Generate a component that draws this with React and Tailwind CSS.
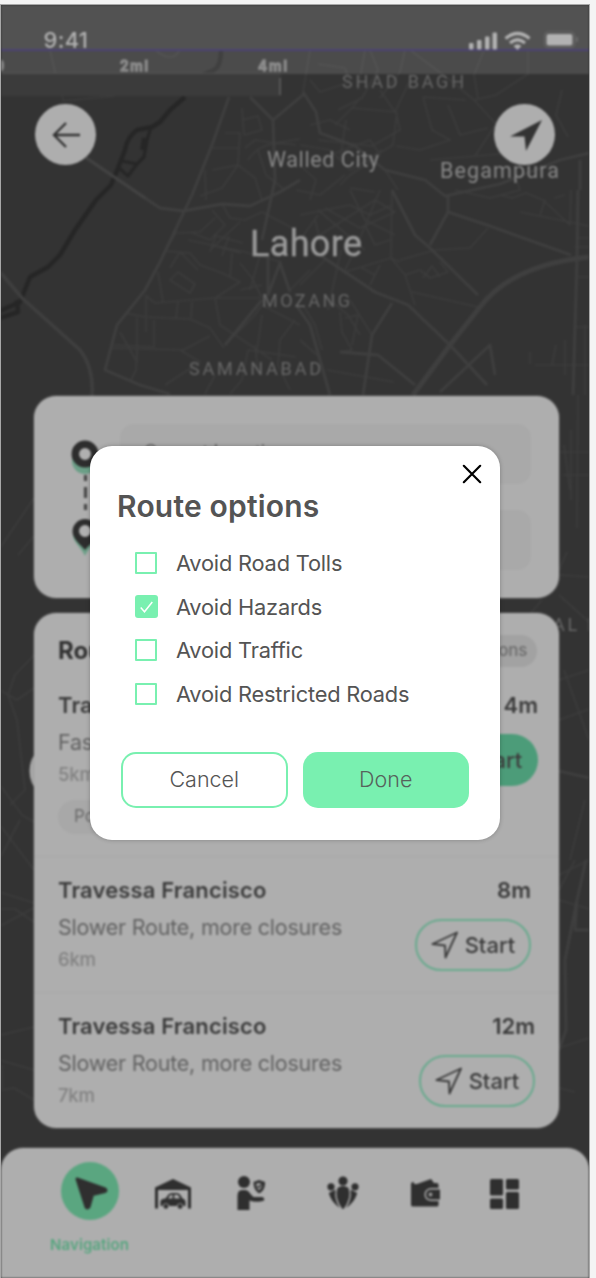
import React from "react";

const roads = [
  "M50 50L56 76M60 90L64 102M62 101L115 96M155 50Q172 64 180 50",
  "M310 50L303 92M365 50L358 90M338 110L362 98L378 70L370 50M405 50L400 72L380 98",
  "M318 64L345 68L350 82L320 92L310 80M410 50L450 80L474 100L496 95L528 74L528 50M484 50L474 75L478 98",
  "M562 90L556 115L568 137M474 100L496 124L475 156M352 108L396 112L400 130L372 146L318 140M397 112L393 145L368 160",
  "M423 97L432 130L450 140L420 150L396 146M448 105L460 135L488 128M423 97L466 100M335 125L352 108L360 98",
  "M225 133L240 133L239 148L212 148M242 108L244 135L262 130L258 116L242 120M239 148L238 165L255 178L262 200M212 170L238 165L222 188L200 196M205 170L206 200",
  "M245 148L255 140L275 143L300 139M248 160Q262 138 296 145M258 150L266 175L285 190M212 210L225 225L210 240L190 232M222 204L230 218L245 220L262 212L296 230",
  "M215 218L200 232L178 233M240 222L210 250M213 235L243 243M211 245L241 253M217 232L210 252M229 236L222 256M188 240L245 252L282 262",
  "M177 231L165 251L190 253L200 265L222 273L240 282L215 298L155 303L145 295M170 268L180 252L198 270M178 272L195 284L190 293L170 280Z",
  "M158 272L163 302M232 253L230 278M240 263L252 278L262 298M215 298L220 325L250 345L272 360M215 298L260 298M240 290L262 285",
  "M125 313L145 317L190 319L210 328L224 348M146 297L146 332M137 317L137 362L120 332M154 320L154 347L114 345M192 302L191 318M178 302L176 318",
  "M112 348L183 350L210 336M137 350L136 370L130 382M180 350L200 362L165 385M225 345L255 315L262 305L300 325M255 345L258 370M248 350L242 380L230 394",
  "M215 375L205 394M248 350L296 357M262 315L256 358M295 320L280 340L278 365L290 390M340 312L342 332L352 350L340 352M345 318L358 315L352 345",
  "M300 215L350 205L370 215L392 205M318 210L365 250M320 235L375 200L395 212L360 228L325 208M350 190L365 220L395 235M380 190L355 250L345 270",
  "M392 190L391 258L345 272M365 225L375 245L390 240M315 220L325 260L300 285M341 250L328 310M391 258L405 275L415 305M380 265L370 285M362 268L375 275",
  "M405 275L420 270L430 278L448 272L440 262M423 278L432 266L440 277M400 260L435 250L470 248L488 228M391 258L400 262M412 292L478 307",
  "M500 195L512 198L526 193L543 200L570 225L571 190M545 200L540 215M554 198L565 195M520 212L589 226M578 238H589M578 277H589M575 247H589",
  "M303 305L315 325L322 350M327 370L394 382M360 335L348 315L330 300M372 335L350 300M317 355L300 340M290 290L310 270M260 255L250 290",
  "M535 365H589M565 340V375M556 345L552 365M530 352V364M585 325V395M574 327H589",
  "M300 145L330 150L350 170L368 160L382 150M330 155L370 140L380 155L350 175L340 185M346 120L340 160M310 125L330 120L350 130M380 90L395 112L410 80",
  "M296 190L320 195L345 175M318 215L300 240M350 188L375 192M385 170L398 190M300 165L316 180L310 200M430 160L500 154M455 190L490 198L520 190L515 175",
  "M0 548L34 498M18 555L34 536M0 690L17 700L34 688M0 825L34 870M34 655L15 675L8 695L17 720L25 790L10 805M0 785L22 815L34 822M0 858L20 820",
  "M0 892L34 903M0 909H15L34 922M0 926L34 908M0 1060L34 1070M2 1065V1090L14 1088L34 1100M0 1035L34 1027",
  "M560 452H589M563 475H589M571 430V500M564 445L570 490M578 395L577 528M560 575L589 577M559 595L589 622M567 552L559 570M542 600L530 614",
  "M559 680L589 670M559 720L589 709M564 670L589 740M585 800L570 860M559 875L589 860M559 900L589 909M559 1048L589 1038M575 860L559 890M559 1088L575 1092",
];

const highways = [
  "M85 157L145 198L160 208L183 211L222 204L250 206L280 192L300 180",
  "M229 97L212 145L192 195L160 262L145 290L117 325L105 370L140 385L170 394",
  "M250 97L273 120L275 180L262 240M273 120L304 94M303 92L316 112L320 133L355 146L385 170L425 180L445 196L500 184L560 160L589 153",
  "M392 190L415 235L430 248L478 295M448 196L448 212L430 245M448 212L487 225L571 255",
  "M320 255L345 272L375 292L408 305L450 345L487 385M296 305L310 325L330 395",
  "M578 190L577 260L573 395M580 160V190M440 392L490 345L495 375M262 300L225 345M268 255V295L280 263L290 292",
  "M340 352L378 355L415 385M392 303L372 335L363 395",
  "M586 860L577 900L565 960L566 1030L559 1050M577 900L575 930H589M559 771L589 778",
];

function MapBackdrop() {
  return (
    <svg viewBox="1 5 588 1273" className="absolute inset-0 h-[1273px] w-[588px]" fill="none">
      <path d="M0 0H596V1278H0Z" fill="#333333" />
      <g stroke="#3c3c3c" strokeWidth="1.7" strokeLinejoin="round">
        {roads.map((d) => <path key={d} d={d} />)}
      </g>
      <g stroke="#3f3f3f" strokeWidth="2.800" strokeLinejoin="round">
        {highways.map((d) => <path key={d} d={d} />)}
      </g>
      <path d="M413 395L450 345L480 307Q512 265 589 257" stroke="#3f3f3f" strokeWidth="5" />
      <g stroke="#262626" strokeWidth="4.500" strokeLinejoin="round">
        <path d="M221 50Q221 66 214 70L200 76M185 97L170 110L160 122L152 127L137 130Q127 137 125 150L118 168L111 185L96 200L75 230L60 255L48 267L30 277L20 302L0 311M17 300L18 312L0 318" />
        <path d="M151 127L147 140L144 157L137 164L128 176L119 168M122 161L137 164" strokeWidth="3.200" />
        <path d="M145 138L143 150" strokeWidth="6" />
      </g>
      <path d="M0 272L22 298L80 350Q94 368 92 396" stroke="#3f3f3f" strokeWidth="3.5" />
      <path d="M85 157L145 198" stroke="#424242" strokeWidth="3" />
      <path d="M0 73H281V96H0Z" fill="#3b3b3b" />
      <path d="M280 78V95" stroke="#606060" strokeWidth="1.5" />
      <path d="M0 0H596V74H0Z" fill="#fff" fillOpacity="0.12" />
      <path d="M0 0H596V50H0Z" fill="#525252" />
      <path d="M0 50H596" stroke="#4b4274" strokeWidth="2" />
      <g fontFamily="Inter, sans-serif" fontSize="14" fontWeight="500" stroke="#8c8c8c" fill="#555" strokeWidth="1.5">
        <text x="-5" y="71">0</text>
        <text x="120" y="71" textLength="28">2mi</text>
        <text x="258" y="71" textLength="29">4mi</text>
      </g>
      <g fontFamily="Roboto, sans-serif" fill="#676767" fontSize="18">
        <text x="342" y="88" textLength="122">SHAD BAGH</text>
        <text x="262" y="307" textLength="88">MOZANG</text>
        <text x="189" y="375" textLength="132">SAMANABAD</text>
        <text x="553" y="631" textLength="44">AL F</text>
      </g>
      <circle cx="60" cy="771" r="30.5" fill="#aaa" />
    </svg>
  );
}

function PlaceNames() {
  return (
    <svg viewBox="1 5 588 400" className="pointer-events-none absolute inset-x-0 top-0 h-[400px] w-[588px]" fontFamily="Roboto, sans-serif" fill="#888">
      <text x="267" y="167" fontSize="21.5" textLength="112">Walled City</text>
      <text x="440" y="178" fontSize="21.5" textLength="119">Begampura</text>
      <text x="250" y="256" fontSize="36" textLength="112" stroke="#999" strokeWidth="0.4" fill="#999">Lahore</text>
    </svg>
  );
}

function StatusBar() {
  return (
    <div className="flex h-[45px] items-start justify-between pt-[22px] pr-[9px] pl-[42.5px] text-[#b2b2b2]">
      <span className="text-[22px] leading-[26px] font-medium tracking-[0.3px]">9:41</span>
      <svg width="112" height="22" viewBox="0 0 112 22" fill="currentColor" className="mt-[3px]">
        <rect x="1" y="13" width="4.5" height="6.5" rx="1" />
        <rect x="9" y="10" width="4.5" height="9.5" rx="1" />
        <rect x="17" y="6.500" width="4.500" height="13" rx="1" />
        <rect x="24.500" y="2.500" width="4.500" height="17" rx="1" />
        <g fill="none" stroke="currentColor" strokeWidth="3.200">
          <path d="M37.500 8.500Q49.500 -1.500 61.500 8.500" />
          <path d="M42 13Q49.500 6.500 57 13" />
        </g>
        <path d="M45.500 16Q49.500 12.500 53.500 16L49.500 20Z" />
        <rect x="76.500" y="2" width="30" height="15.500" rx="4" fill="none" stroke="#696969" strokeWidth="1.200" />
        <rect x="78.500" y="4" width="26" height="11.500" rx="2" />
        <path d="M109 7V12" stroke="#696969" strokeWidth="2" />
      </svg>
    </div>
  );
}

function MapButtons() {
  return (
    <div className="mt-[54px] flex justify-between px-[34px]">
      <div className="flex size-[61px] items-center justify-center rounded-full bg-[#aeaeae]">
        <svg width="30" height="28" viewBox="0 0 30 28" fill="none" stroke="#333" strokeWidth="2.400">
          <path d="M29 14H3M15 2L3 14L15 26" />
        </svg>
      </div>
      <div className="flex size-[61px] items-center justify-center rounded-full bg-[#aeaeae]">
        <svg width="34" height="34" viewBox="0 0 34 34" fill="#333" className="mt-px ml-0.5">
          <path d="M33 2L17 33L15.500 18.500H1Z" />
        </svg>
      </div>
    </div>
  );
}

function LocationCard() {
  return (
    <div className="mr-[30px] ml-[33px] mt-[231px] flex h-[202px] gap-5 rounded-[22px] bg-[#aeaeae] pt-7 pr-7 pl-9 shadow-[0_0_2px_#777]">
      <svg width="30" height="130" viewBox="0 0 30 130" fill="none" className="mt-4 shrink-0">
        <circle cx="15" cy="21" r="13" fill="#6b9f87" />
        <circle cx="15" cy="14" r="9.700" fill="#b0b0b0" stroke="#2d2d2d" strokeWidth="7.500" />
        <path d="M15.500 35V75" stroke="#484848" strokeWidth="3.200" strokeDasharray="6 6 11 6" />
        <path d="M15 116C11 107 3 102 3 95A12 12 0 0 1 27 95C27 102 19 107 15 116Z" fill="#6b9f87" />
        <circle cx="15" cy="91" r="8" fill="#b0b0b0" />
        <path fillRule="evenodd" d="M15 110C11 105 2.500 99 2.500 91.500A12.500 12.500 0 0 1 27.500 91.500C27.500 99 19 105 15 110ZM15 85A6 6 0 1 0 15 97A6 6 0 1 0 15 85Z" fill="#2d2d2d" />
      </svg>
      <div className="flex flex-1 flex-col gap-[26px] text-[18px] text-[#666]">
        <div className="h-[60px] rounded-[14px] bg-[#a9a9a9] px-6 pt-3.5">Current Location</div>
        <div className="h-[60px] rounded-[14px] bg-[#a9a9a9]" />
      </div>
    </div>
  );
}

function ArrowOutline() {
  return (
    <svg width="28" height="28" viewBox="0 0 28 28" fill="none" stroke="#3b3b3b" strokeWidth="1.900" strokeLinejoin="round">
      <path d="M26 1.500L14.500 26.500L14 14.500L1.500 13Z" />
    </svg>
  );
}

function RouteRow({ name, note, distance, time, filled, timeClass, rowClass, children }) {
  return (
    <div className={rowClass}>
      <div className="flex justify-between">
        <div className="flex flex-col pl-6">
          <span className="h-[37px] text-[22px] leading-7 font-semibold tracking-[0.15px] text-[#3c3c3c]">{name}</span>
          <span className="h-[34px] text-[21.500px] leading-7 tracking-[-0.230px] text-[#626262]">{note}</span>
          <span className="text-[18.500px] leading-6 font-medium tracking-[-0.200px] text-[#828282]">{distance}</span>
          {children}
        </div>
        <div className={"flex flex-col items-end " + timeClass}>
          <span className="text-[22px] leading-7 font-semibold text-[#3c3c3c]">{time}</span>
          <div className={"mt-[15px] flex h-[52px] w-[116px] items-center justify-center gap-1.5 rounded-full text-[22px] font-medium text-[#3d3d3d] " + (filled ? "bg-[#4c9c79]" : "border-[2.5px] border-[#69aa8e]")}>
            <ArrowOutline />
            <span>Start</span>
          </div>
        </div>
      </div>
    </div>
  );
}

function RoutesCard() {
  return (
    <div className="mr-[30px] ml-[33px] mt-[15px] h-[515px] rounded-[22px] bg-[#aeaeae] shadow-[0_0_2px_#777]">
      <div className="flex h-[78px] items-start justify-between pt-[22px] pr-[22px] pl-6">
        <span className="text-[24px] leading-[32px] font-bold text-[#333]">Routes</span>
        <span className="flex h-8 items-center rounded-full bg-[#a2a2a2] px-2.5 text-[17px] font-medium tracking-[-0.3px] text-[#6c6c6c]">Route options</span>
      </div>
      <RouteRow name="Travessa Francisco" note="Fastest Route" distance="5km" time="4m" filled timeClass="pr-[21px]" rowClass="h-[166px] border-b border-[#a7a7a7]">
        <span className="mt-3.5 flex h-[34px] w-28 items-center rounded-full bg-[#a8a8a8] px-4 text-[17px] text-[#6b6b6b]">Police</span>
      </RouteRow>
      <RouteRow name="Travessa Francisco" note="Slower Route, more closures" distance="6km" time="8m" timeClass="pr-[28px]" rowClass="h-[136px] border-b border-[#a7a7a7] pt-[19px]" />
      <RouteRow name="Travessa Francisco" note="Slower Route, more closures" distance="7km" time="12m" timeClass="pr-[24px]" rowClass="pt-[19px]" />
    </div>
  );
}

function GarageIcon() {
  return (
    <svg width="36" height="31" viewBox="0 0 36 31" fill="#2f2f2f">
      <path d="M0 8.500L18 0L36 8.500V29.500H33V11H3V29.500H0Z" />
      <path fillRule="evenodd" d="M5.500 27V22Q6 20 10.500 19.500L13.500 15.500Q14.500 14 17 14H22Q24.500 14 26 17L27.500 19.500Q30.500 20.500 30.500 23V27H28.500A3.500 3.500 0 0 0 21.700 27H14.300A3.500 3.500 0 0 0 7.500 27ZM13 19.500H17.500V15.700H16.500Q15 15.700 13 19.500ZM19.300 15.700V19.500H25Q23.500 15.700 22 15.700Z" />
      <circle cx="10.900" cy="27.400" r="2.400" />
      <circle cx="25.100" cy="27.400" r="2.400" />
    </svg>
  );
}

function AssistIcon() {
  return (
    <svg width="28" height="34" viewBox="0 0 28 34" fill="#2f2f2f">
      <circle cx="7" cy="6" r="6" />
      <path d="M0.500 34V20Q0.500 14 5 14H8Q11 14 13.500 18L16.500 21H25Q28 21.500 27 24.500Q20 27 12.500 24.500V34Z" />
      <path fillRule="evenodd" d="M22 4L28 6Q28.500 14 22 17.500Q16.500 14 16.500 6ZM22 7L19 8Q19.500 12 22 14.300Q25 12 25.200 8Z" />
      <path d="M20.200 10L22 11.500L24.500 8" fill="none" stroke="#2f2f2f" strokeWidth="1.300" />
    </svg>
  );
}

function CommunityIcon() {
  return (
    <svg width="32" height="34" viewBox="0 0 32 34" fill="#2f2f2f">
      <circle cx="16" cy="5" r="4.600" />
      <circle cx="4" cy="10.800" r="3.600" />
      <circle cx="28" cy="10.800" r="3.600" />
      <path d="M10.500 12Q16 8 21.500 12Q25 22 16.500 33H15.500Q7 22 10.500 12Z" />
      <path d="M1.800 17L8.500 13.500Q7 24 13 32Q4 26 1.800 17ZM30.200 17L23.500 13.500Q25 24 19 32Q28 26 30.200 17Z" />
    </svg>
  );
}

function WalletIcon() {
  return (
    <svg width="30" height="29" viewBox="0 0 30 29" fill="#2f2f2f">
      <path d="M0 5Q0 3 3 3L3 5H6L20 0L23 4H26Q27.500 4 27.500 6V9H20Q13.500 10 13.500 15.500Q13.500 21 20 22H27.500V26Q27.500 27.500 26 27.500H2Q0 27.500 0 26Z" />
      <path d="M20 10.500H29V20.500H20Q15 20 15 15.500Q15 11 20 10.500Z" />
      <circle cx="19.500" cy="15.500" r="1.900" fill="#999" />
    </svg>
  );
}

function DashboardIcon() {
  return (
    <svg width="29" height="30" viewBox="0 0 30 30" preserveAspectRatio="none" fill="#2f2f2f">
      <rect width="13.500" height="16.500" rx="1.500" />
      <rect x="16.500" width="13.500" height="10.500" rx="1.500" />
      <rect y="19.500" width="13.500" height="10.500" rx="1.500" />
      <rect x="16.500" y="13" width="13.500" height="17" rx="1.500" />
    </svg>
  );
}

function BottomNav() {
  return (
    <div className="mt-5 flex h-[130px] items-start rounded-t-[22px] bg-[#aeaeae] pt-[14px] pl-[48.5px] shadow-[0_0_2px_#777]">
      <div className="flex w-[80px] flex-col items-center">
        <div className="flex size-[58px] items-center justify-center rounded-full bg-[#5aa680]">
          <svg width="34" height="34" viewBox="0 0 34 34" fill="#2f2f2f" stroke="#2f2f2f" strokeWidth="3" strokeLinejoin="round" className="mt-1 ml-0.5">
            <path d="M3 3L31 13Q33 14.500 31 15.500L18.500 18.500L15 31Q13 33 12 31Z" />
          </svg>
        </div>
        <span className="mt-[15px] text-[15px] leading-5 font-semibold tracking-[0.08px] text-[#58a680]">Navigation</span>
      </div>
      <div className="mt-[17px] ml-[25.500px]"><GarageIcon /></div>
      <div className="mt-[14px] ml-[45.5px]"><AssistIcon /></div>
      <div className="mt-[14px] ml-[62px]"><CommunityIcon /></div>
      <div className="mt-[17px] ml-[52px]"><WalletIcon /></div>
      <div className="mt-[17px] ml-[49px]"><DashboardIcon /></div>
    </div>
  );
}

const options = [
  { label: "Avoid Road Tolls", checked: false },
  { label: "Avoid Hazards", checked: true },
  { label: "Avoid Traffic", checked: false },
  { label: "Avoid Restricted Roads", checked: false },
];

function RouteOptionsModal() {
  return (
    <div role="dialog" className="absolute top-[446px] left-[90px] h-[394px] w-[410px] rounded-[22px] bg-white px-7 pt-[18px] text-[#545454] shadow-[0_0_4px_rgba(0,0,0,0.25)]">
      <div className="-mr-[10px] flex h-5 justify-end">
        <svg width="20" height="20" viewBox="0 0 20 20" stroke="#000" strokeWidth="2.200" strokeLinecap="round">
          <path d="M1.800 1.800L18.200 18.200M18.200 1.800L1.800 18.200" />
        </svg>
      </div>
      <h1 className="-ml-px mt-1 text-[30px] leading-9 font-semibold tracking-[0.200px]">Route options</h1>
      <div className="mt-[17px] flex flex-col pl-[17px]">
        {options.map((o) => (
          <div key={o.label} className="flex h-[43.800px] items-center">
            <span className={o.checked ? "flex size-[23px] items-center justify-center rounded-[3px] bg-[#79f0b0]" : "mr-px size-[22px] rounded-[1px] border-2 border-[#79f0b0]"}>
              {o.checked && (
                <svg width="13" height="12" viewBox="0 0 13 12" fill="none" stroke="#fff" strokeWidth="1.500">
                  <path d="M0.700 6.500L4.500 10.800L12.300 1" />
                </svg>
              )}
            </span>
            <span className="ml-[18px] text-[21.800px] leading-7 tracking-[-0.200px]">{o.label}</span>
          </div>
        ))}
      </div>
      <div className="mt-9 ml-[3px] flex gap-[15px] text-[21.500px] leading-7 font-light">
        <button className="h-14 w-[166.500px] rounded-[15px] border-2 border-[#79f0b0] pb-[2px]">Cancel</button>
        <button className="h-14 w-[166.500px] rounded-[15px] bg-[#79f0b0] pb-[2px] text-[#56625c]">Done</button>
      </div>
    </div>
  );
}

export default function App() {
  return (
    <div className="relative h-[1278px] w-[596px] overflow-hidden bg-[#f4f4f4] pt-1 font-['Inter',sans-serif]">
      <div className="h-[1274px] w-[590px] overflow-hidden border border-b-0 border-[#a8a8a8] bg-[#333]">
        <div className="relative h-[1273px] w-[588px] blur-[0.9px]">
          <MapBackdrop />
          <div className="relative flex flex-col">
            <StatusBar />
            <MapButtons />
            <LocationCard />
            <RoutesCard />
            <BottomNav />
          </div>
          <PlaceNames />
        </div>
      </div>
      <RouteOptionsModal />
    </div>
  );
}
